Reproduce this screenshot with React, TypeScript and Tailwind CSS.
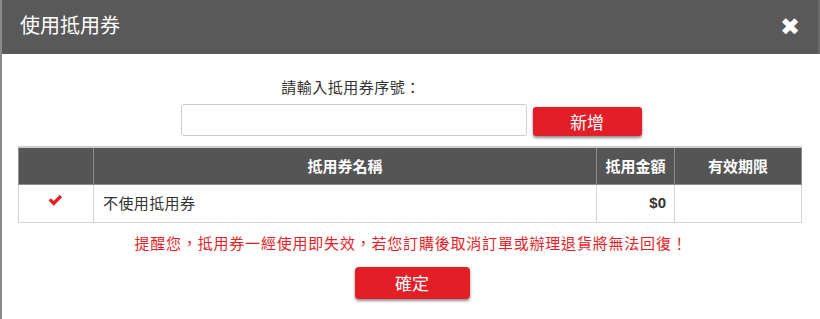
import React from "react";

const cjk = { fontFamily: '"Noto Sans CJK TC", "Liberation Sans", sans-serif' };

function CheckIcon() {
  return (
    <svg width="15" height="11" viewBox="0 0 14 10" className="block">
      <path d="M0.6 5 L2.7 2.9 L5.3 5.5 L11 -0.2 L13.2 1.9 L5.3 9.8 Z" fill="#e31e24" />
    </svg>
  );
}

export default function App() {
  return (
    <div className="w-[820px] h-[319px] bg-white border-l-2 border-[#8a8a8a] overflow-hidden" style={cjk}>
      <div className="h-[54px] bg-[#595959] flex items-center justify-between pl-[18px] pr-[18px] border-r-2 border-[#6a6a6a]">
        <h1 className="text-[20px] text-white leading-none -mt-[4px]">使用抵用券</h1>
        <span className="text-white text-[24px] font-bold leading-none" style={{ fontFamily: '"DejaVu Sans", sans-serif' }}>
          ✖
        </span>
      </div>

      <div className="px-4">
        <p className="text-[15px] text-[#333] mt-[23px] leading-5 text-center pr-[120px] tracking-[0.5px]">請輸入抵用券序號：</p>
        <div className="flex items-center justify-center gap-[6px] mt-[7px]">
          <input className="w-[346px] h-[32px] border border-[#cccccc] rounded-[3px] outline-none" />
          <button className="w-[109px] h-[29px] mt-[3px] bg-[#e41e26] text-white text-[17px] rounded-[3px] shadow-[0_2px_3px_rgba(0,0,0,0.45)] leading-none">
            新增
          </button>
        </div>

        <table className="mt-[10px] w-[784px] border-collapse text-[15px]">
          <thead>
            <tr className="bg-[#555555] text-white font-bold h-[37px] border-t-[2px] border-[#cccccc]">
              <th className="w-[75px] border border-[#8c8c8c]"></th>
              <th className="border border-[#8c8c8c]">抵用券名稱</th>
              <th className="w-[78px] border border-[#8c8c8c]">抵用金額</th>
              <th className="w-[127px] border border-[#8c8c8c]">有效期限</th>
            </tr>
          </thead>
          <tbody>
            <tr className="h-[38px] text-[#333]">
              <td className="border border-[#d4d4d4]">
                <div className="flex justify-center -mt-[6px] -ml-[2px]">
                  <CheckIcon />
                </div>
              </td>
              <td className="border border-[#d4d4d4] pl-[9px] tracking-[0.4px]">不使用抵用券</td>
              <td className="border border-[#d4d4d4] text-right pr-[8px] font-bold" style={{ fontFamily: '"Liberation Sans", sans-serif' }}>
                $0
              </td>
              <td className="border border-[#d4d4d4]"></td>
            </tr>
          </tbody>
        </table>

        <p className="text-center text-[15px] text-[#e41e26] mt-[10px] leading-5 tracking-[0.8px]">
          提醒您，抵用券一經使用即失效，若您訂購後取消訂單或辦理退貨將無法回復！
        </p>
        <div className="flex justify-center mt-[14px]">
          <button className="w-[115px] h-[32px] ml-[2px] bg-[#e41e26] text-white text-[17px] rounded-[4px] shadow-[0_2px_3px_rgba(0,0,0,0.45)] leading-none">
            確定
          </button>
        </div>
      </div>
    </div>
  );
}
